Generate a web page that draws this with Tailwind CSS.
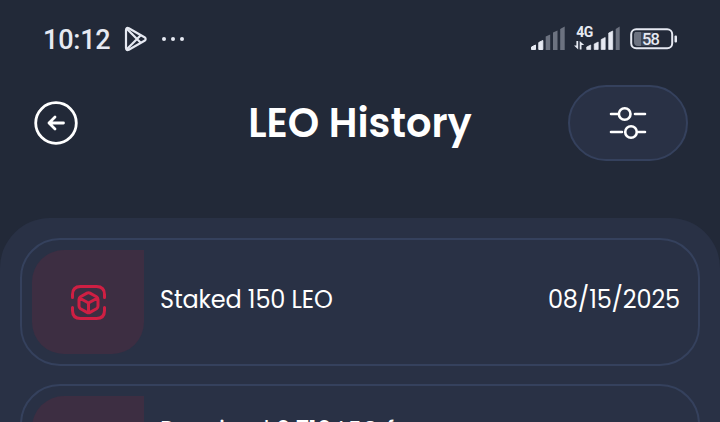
<!DOCTYPE html>
<html lang="en">
  <head>
    <meta charset="UTF-8" />
    <meta name="viewport" content="width=device-width, initial-scale=1.0" />
    <title>LEO History</title>
    <script src="https://cdn.jsdelivr.net/npm/@tailwindcss/browser@4"></script>
  </head>
  <body class="h-[422px] w-[720px] overflow-hidden bg-[#222938] font-['Poppins','Inter',sans-serif] text-white">
    <!-- status bar -->
    <div class="flex h-[78px] items-center justify-between pl-[43px] pr-[42px] text-[#e6e9f2]">
      <div class="flex items-center">
        <span class="w-[81px] whitespace-nowrap pt-[2px] font-['Roboto',sans-serif] text-[27px] font-medium leading-none tracking-[-0.2px]">10:12</span>
        <svg class="h-[26px] w-[24px]" viewBox="0 0 24 26" fill="none" stroke="currentColor" stroke-width="2.200" stroke-linejoin="round">
          <path d="M2 4.2Q2 1 4.8 2.3L20.5 11.2Q22.8 13 20.5 14.8L4.8 23.7Q2 25 2 21.8Z" />
          <path d="M3 3L17 17M3 23L17 9M8 8L13 13L8 18" />
        </svg>
        <svg class="ml-[13px] h-[6px] w-[24px]" viewBox="0 0 24 6" fill="currentColor">
          <circle cx="3" cy="3" r="2" />
          <circle cx="12" cy="3" r="2" />
          <circle cx="21" cy="3" r="2" />
        </svg>
      </div>
      <div class="flex items-center">
        <svg class="h-[26px] w-[35px]" viewBox="0.8 0 35 26" fill="currentColor">
          <path d="M1.300 23.500v-2.500l4-2v4.500zM8.600 23.500v-7l4-2v9z" stroke="currentColor" stroke-width="1" stroke-linejoin="round" />
          <g fill="#6c7280">
            <path d="M15.500 24V10.500l4.500-2V24zM22.800 24V6.500l4.500-2V24zM30 24V3l4.500-2.500V24z" />
          </g>
        </svg>
        <svg class="ml-[8px] h-[28px] w-[48px]" viewBox="0.8 0 48 28">
          <text x="3" y="12" class="fill-current font-['Roboto',sans-serif] text-[14px] font-bold" textLength="17">4G</text>
          <g fill="currentColor">
            <path d="M3.200 16h1.800v8.500L0.800 20.500h2.400zM6.500 24.500v-8.500l4.500 4H8.300v4.500z" />
            <path d="M13.500 24.500v-2.500l4-2v4.500zM21 24.500v-5.500l4-2v7.500zM28 24.500V14.500l4-2v12zM35.500 24.500V8l4-2v18.500z" stroke="currentColor" stroke-width=".7" stroke-linejoin="round" />
            <path d="M42.500 25V4l4-2.500V25z" fill="#6c7280" />
          </g>
        </svg>
        <svg class="ml-[8px] h-[22px] w-[48px]" viewBox="0 0 48 22">
          <path d="M5 4h6v14H8a4 4 0 0 1-4-4V6z" fill="#6c7280" />
          <path d="M11 4h12v14H11z" fill="#3d4454" />
          <rect x="1.200" y="1.200" width="41" height="19" rx="5" fill="none" stroke="currentColor" stroke-width="2" />
          <rect x="44.500" y="7.500" width="2.500" height="7" rx="1" fill="currentColor" />
          <text x="12" y="16.500" class="fill-current font-['Roboto',sans-serif] text-[16.500px] font-medium" textLength="18">58</text>
        </svg>
      </div>
    </div>

    <!-- header -->
    <header class="flex h-[140px] items-start justify-between pl-[34px] pr-[32px] pt-[7px]">
      <svg class="mt-[16px] h-[44px] w-[44px]" viewBox="0 0 44 44" fill="none" stroke="white" stroke-width="2.800" stroke-linecap="round" stroke-linejoin="round">
        <circle cx="22" cy="22" r="20.300" />
        <path d="M29.500 22H15M21 16l-6 6 6 6" />
      </svg>
      <h1 class="ml-[74px] mt-[8px] whitespace-nowrap text-[40px] font-semibold leading-[60px]">LEO History</h1>
      <button class="flex h-[76px] w-[120px] items-center justify-center rounded-[38px] border-2 border-[#35415d] bg-[#293145]">
        <svg class="h-[34px] w-[38px]" viewBox="0 0 38 34" fill="none" stroke="white" stroke-width="2.600" stroke-linecap="round">
          <path d="M2 8h7M26 8h10M2 26h11M29 26h7" />
          <circle cx="15.700" cy="8" r="5.800" />
          <circle cx="22" cy="26" r="5.800" />
        </svg>
      </button>
    </header>

    <!-- history list -->
    <main class="flex h-[204px] flex-col gap-[18px] overflow-hidden rounded-t-[50px] bg-[#293145] px-5 pt-5">
      <div class="flex h-[128px] shrink-0 items-start rounded-[40px] border-2 border-[#35415d] p-[10px] text-[24px] leading-[36px] tracking-[-0.15px]">
        <div class="flex h-[104px] w-[112px] items-center justify-center rounded-[32px] rounded-tr-none bg-[#3d2e42]">
          <svg class="h-[35px] w-[35px]" viewBox="0.5 0.5 35 35" fill="none" stroke="#cf1f43" stroke-width="3" stroke-linecap="round" stroke-linejoin="round">
            <path d="M2 13V10Q2 2 10 2H26Q34 2 34 10V13M2 23V26Q2 34 10 34H26Q34 34 34 26V23" />
            <path d="M16.500 8.600Q18 7.800 19.500 8.600L26 12.200Q27.500 13.200 27.500 15V21.500Q27.500 23.300 26 24.300L19.500 27.900Q18 28.700 16.500 27.900L10 24.300Q8.500 23.300 8.500 21.500V15Q8.500 13.200 10 12.200ZM9.500 13.800L18 18.500L26.500 13.800M18 18.500V27.500" />
          </svg>
        </div>
        <span class="ml-[16px] mt-[32px] whitespace-nowrap">Staked 150 LEO</span>
        <span class="ml-auto mr-[8px] mt-[32px] whitespace-nowrap">08/15/2025</span>
      </div>
      <div class="flex h-[128px] shrink-0 items-start rounded-[40px] border-2 border-[#35415d] p-[10px] text-[24px] leading-[36px]">
        <div class="h-[104px] w-[112px] rounded-[32px] rounded-tr-none bg-[#3d2e42]"></div>
        <span class="ml-[16px] mt-[17px] whitespace-nowrap">Received 0.710 LEO f</span>
      </div>
    </main>
  </body>
</html>
